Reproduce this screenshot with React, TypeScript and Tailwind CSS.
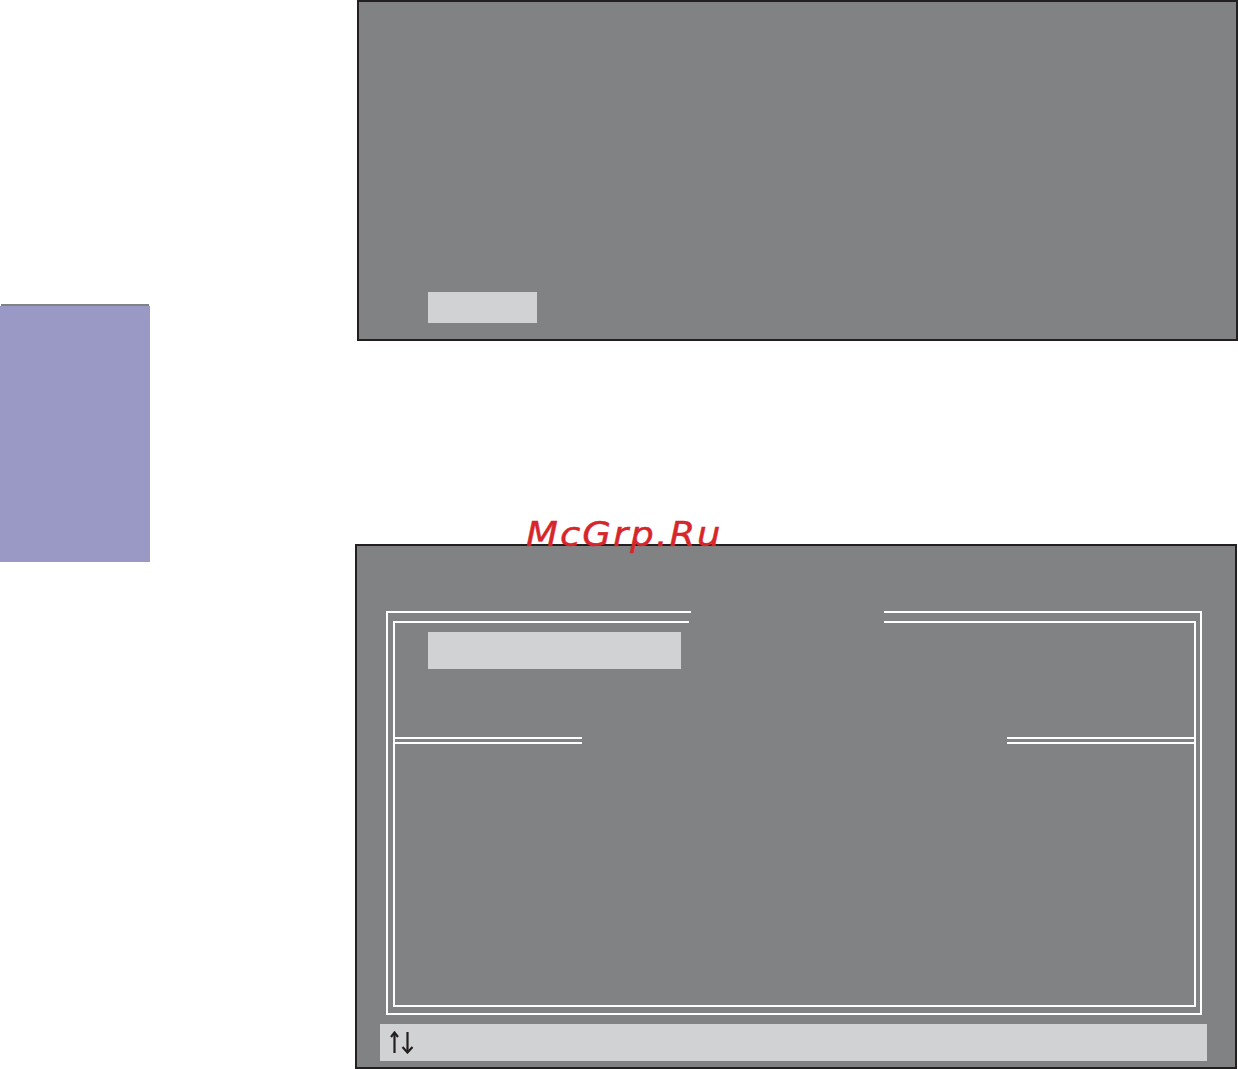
import React from 'react';

const PANEL = 'bg-[#818284] border-2 border-[#231f20]';

// Two parallel white rules with a gap, used for the section divider
const DoubleRule: React.FC<{ width: number; className?: string }> = ({ width, className }) => (
  <div className={`flex flex-col gap-[3px] ${className ?? ''}`} style={{ width }}>
    <div className="h-[2px] bg-white" />
    <div className="h-[2px] bg-white" />
  </div>
);

const ArrowKeys: React.FC = () => (
  <svg width="26" height="23" viewBox="0 0 26 23" fill="none" stroke="#231f20" strokeWidth="2.2" strokeLinecap="butt">
    {/* up arrow */}
    <path d="M4.5 22 V2" />
    <path d="M1 6 L4.5 1.5 L8 6" />
    {/* down arrow */}
    <path d="M17.5 1 V21" />
    <path d="M12.5 16 L17.5 21.5 L22.5 16" />
  </svg>
);

const App: React.FC = () => {
  return (
    <div className="relative w-[1238px] h-[1069px] bg-white flex overflow-hidden" style={{ fontFamily: '"DejaVu Sans", sans-serif' }}>
      {/* side tab */}
      <div className="w-[150px] pt-[304px] shrink-0">
        <div className="h-[2px] mx-[1px] bg-[#818284]" />
        <div className="h-[256px] bg-[#9a98c5]" />
      </div>

      <div className="flex flex-col pl-[205px]">
        {/* upper screen */}
        <div className={`${PANEL} ml-[2px] w-[881px] h-[341px]`}>
          <div className="ml-[69px] mt-[290px] w-[109px] h-[31px] bg-[#d1d2d4]" />
        </div>

        {/* lower screen */}
        <div className={`${PANEL} mt-[203px] w-[882px] h-[525px]`}>
          <div className="ml-[29px] mt-[65px] w-[816px] h-[404px] border-x-2 border-b-2 border-white">
            <div className="flex justify-between h-[2px]">
              <div className="w-[303px] bg-white" />
              <div className="w-[316px] bg-white" />
            </div>
            <div className="ml-[5px] mr-[4px] mt-[8px] h-[386px] border-x-2 border-b-2 border-white">
              <div className="flex justify-between h-[2px]">
                <div className="w-[294px] bg-white" />
                <div className="w-[310px] bg-white" />
              </div>
              <div className="ml-[33px] mt-[9px] w-[253px] h-[37px] bg-[#d1d2d4]" />
              <div className="flex justify-between mt-[68px]">
                <DoubleRule width={187} />
                <DoubleRule width={187} />
              </div>
            </div>
          </div>
          <div className="ml-[23px] mt-[9px] w-[827px] h-[37px] bg-[#d1d2d4] flex items-center pl-[10px]">
            <ArrowKeys />
          </div>
        </div>
      </div>

      <div className="absolute left-[526px] top-[513px] text-[37px] italic leading-[40px] tracking-[2px] text-[#d7262b] scale-y-[0.92] origin-bottom [-webkit-text-stroke:0.5px_#d7262b]">
        McGrp.Ru
      </div>
    </div>
  );
};

export default App;
